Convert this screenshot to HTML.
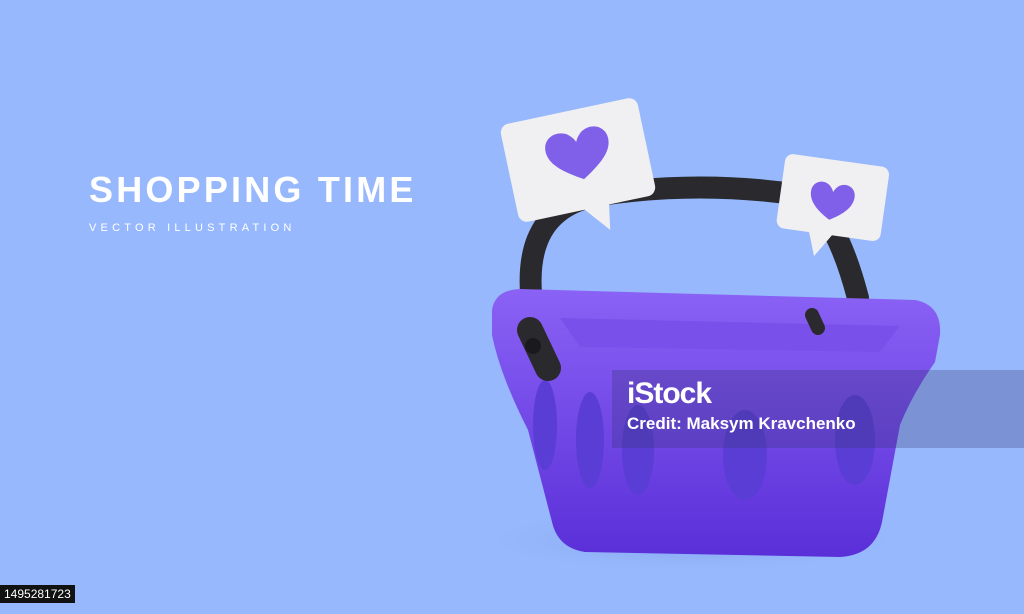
<!DOCTYPE html>
<html><head><meta charset="utf-8"><style>
html,body{margin:0;padding:0}
body{width:1024px;height:614px;background:#97b8fc;position:relative;overflow:hidden;font-family:"Liberation Sans",sans-serif}
.t1{position:absolute;left:89px;top:169px;color:#fff;font-weight:bold;font-size:36px;letter-spacing:3.2px}
.t2{position:absolute;left:89px;top:222px;color:#fff;font-size:11px;letter-spacing:4.2px}
svg{position:absolute;left:0;top:0}
.wm{position:absolute;left:612px;top:370px;width:412px;height:78px;background:rgba(50,50,110,0.28)}
.wm1{position:absolute;left:627px;top:377px;color:#fff;font-weight:bold;font-size:30px;letter-spacing:-1px}
.wm2{position:absolute;left:627px;top:414px;color:#fff;font-weight:bold;font-size:17px}
.id{position:absolute;left:0;top:585px;background:#111;color:#fff;font-size:12px;padding:2px 4px}
</style></head><body>
<div class="t1">SHOPPING TIME</div>
<div class="t2">VECTOR ILLUSTRATION</div>
<svg width="1024" height="614" viewBox="0 0 1024 614">
<defs>
<linearGradient id="b" x1="0" y1="0" x2="0" y2="1"><stop offset="0" stop-color="#8a62f5"/><stop offset="1" stop-color="#5a2fd8"/></linearGradient>
<radialGradient id="sh" cx="0.5" cy="0.5" r="0.5"><stop offset="0" stop-color="#6f8fe0" stop-opacity=".6"/><stop offset="1" stop-color="#97b8fc" stop-opacity="0"/></radialGradient>
</defs>
<ellipse cx="690" cy="540" rx="230" ry="35" fill="url(#sh)"/>
<path d="M540 345 Q505 210 600 195 Q700 180 800 195 Q835 210 858 298" fill="none" stroke="#2a2a2e" stroke-width="22" stroke-linecap="round"/>
<path d="M492 310 Q495 290 520 289 L915 300 Q942 305 940 335 L935 362 Q912 395 900 425 L882 522 Q875 555 840 557 L585 552 Q558 548 552 522 L528 430 Q500 375 492 335 Z" fill="url(#b)"/>
<path d="M560 318 L900 326 L880 352 L580 347 Z" fill="#7a50ea"/>
<ellipse cx="545" cy="425" rx="12" ry="45" fill="#5a3dd5"/>
<ellipse cx="590" cy="440" rx="14" ry="48" fill="#5a3dd5"/>
<ellipse cx="638" cy="450" rx="16" ry="45" fill="#5a3dd5"/>
<ellipse cx="745" cy="455" rx="22" ry="45" fill="#5a3dd5"/>
<ellipse cx="855" cy="440" rx="20" ry="45" fill="#5a3dd5"/>
<path d="M530 330 L548 368" stroke="#2a2a2e" stroke-width="26" stroke-linecap="round"/>
<circle cx="533" cy="346" r="8" fill="#1a1a1e"/>
<path d="M812 315 L818 328" stroke="#2a2a2e" stroke-width="14" stroke-linecap="round"/>
<g transform="rotate(-12 578 160)">
<rect x="508" y="110" width="140" height="100" rx="9" fill="#f0f0f2"/>
<path d="M570 205 L595 235 L600 205 Z" fill="#f0f0f2"/>
<path d="M580 180 C560 168 548 158 548 145 C548 132 562 126 573 133 Q578 137 580 142 Q582 137 587 133 C598 126 612 132 612 145 C612 158 600 168 580 180 Z" fill="#8060e8"/>
</g>
<g transform="rotate(8 832 200)">
<rect x="780" y="160" width="105" height="75" rx="8" fill="#f0f0f2"/>
<path d="M812 230 L822 258 L840 230 Z" fill="#f0f0f2"/>
<path d="M832 220 C818 212 810 204 810 194 C810 184 821 180 828 186 Q831 189 832 192 Q833 189 836 186 C843 180 854 184 854 194 C854 204 846 212 832 220 Z" fill="#8060e8"/>
</g>
</svg>
<div class="wm"></div>
<div class="wm1">iStock</div>
<div class="wm2">Credit: Maksym Kravchenko</div>
<div class="id">1495281723</div>
</body></html>
